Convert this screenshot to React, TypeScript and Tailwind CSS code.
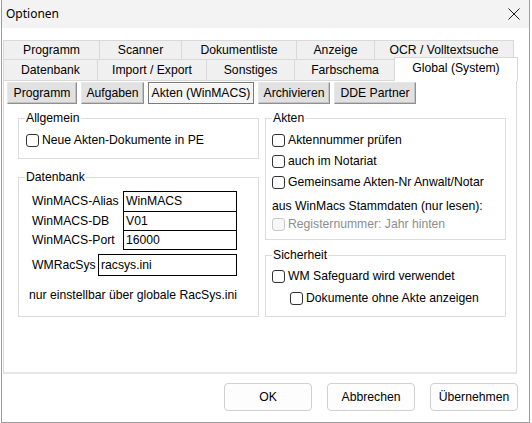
import type { ReactNode } from 'react';

const topTabs = [
  { label: 'Programm', w: 'w-[96px]' },
  { label: 'Scanner', w: 'w-[82px]' },
  { label: 'Dokumentliste', w: 'w-[115px]' },
  { label: 'Anzeige', w: 'w-[78px]' },
  { label: 'OCR / Volltextsuche', w: 'w-[140px] border-r' },
];

const bottomTabs = [
  { label: 'Datenbank', w: 'w-[94px]' },
  { label: 'Import / Export', w: 'w-[109px]' },
  { label: 'Sonstiges', w: 'w-[88px]' },
  { label: 'Farbschema', w: 'w-[101px]' },
];

const subTabs = [
  { label: 'Programm', w: 'w-[70px]' },
  { label: 'Aufgaben', w: 'w-[63px]' },
  { label: 'Akten (WinMACS)', w: 'w-[106px]', active: true },
  { label: 'Archivieren', w: 'w-[72px]' },
  { label: 'DDE Partner', w: 'w-[82px]' },
];

function Checkbox({ label, disabled = false, className = '' }: { label: string; disabled?: boolean; className?: string }) {
  return (
    <label className={`flex items-center h-[15px] leading-[15px] ${className}`}>
      <span
        className={`shrink-0 w-[13px] h-[13px] rounded-[3px] border ${
          disabled ? 'border-[#c9c9c9] bg-[#f7f7f7]' : 'border-[#333333] bg-white'
        }`}
      />
      <span className={`ml-[3px] ${disabled ? 'text-[#8d8d8d]' : 'text-black'}`}>{label}</span>
    </label>
  );
}

function GroupBox({ title, className, children }: { title: string; className: string; children: ReactNode }) {
  return (
    <div className={`border border-[#dcdcdc] flex flex-col ${className}`}>
      <div className="-mt-[8px] ml-[6px] px-[1px] bg-white w-fit h-[15px] leading-[15px]">{title}</div>
      {children}
    </div>
  );
}

function Field({ value, className }: { value: string; className: string }) {
  return (
    <div className={`border border-black bg-white pl-[2px] flex items-center leading-[15px] ${className}`}>
      {value}
    </div>
  );
}

export default function App() {
  return (
    <div className="w-[532px] h-[423px] bg-white font-['Liberation_Sans',Arial,sans-serif] text-[12.2px] text-black whitespace-nowrap">
      <div className="ml-px w-[529px] h-[423px] border-x border-b border-[#9c9c9c] flex flex-col">
        {/* title bar */}
        <div className="h-[28px] bg-[#f3f3f3] flex items-center justify-between pl-[4px] pr-[8px] shrink-0">
          <span className="font-['Segoe_UI','Noto_Sans',sans-serif] text-[12px] text-black">Optionen</span>
          <svg width="12" height="12" viewBox="0 0 12 12" className="mr-[1px]">
            <path d="M0.5 0.5 L11.5 11.5 M11.5 0.5 L0.5 11.5" stroke="#1a1a1a" strokeWidth="1" fill="none" />
          </svg>
        </div>

        {/* tab rows */}
        <div className="mt-[12px] ml-px flex flex-col">
          <div className="flex h-[19px]">
            {topTabs.map((t) => (
              <div
                key={t.label}
                className={`${t.w} h-[19px] border-t border-l border-[#d9d9d9] bg-[#f0f0f0] flex items-center justify-center leading-[15px]`}
              >
                {t.label}
              </div>
            ))}
          </div>
          <div className="flex h-[21px] items-end">
            {bottomTabs.map((t) => (
              <div
                key={t.label}
                className={`${t.w} h-[21px] border-t border-l border-[#d9d9d9] bg-[#f0f0f0] flex items-center justify-center leading-[15px]`}
              >
                {t.label}
              </div>
            ))}
            <div className="relative z-10 -ml-px -mb-px w-[124px] h-[24px] border-t border-x border-[#d9d9d9] bg-white flex items-start justify-center pt-[3px] leading-[15px]">
              Global (System)
            </div>
          </div>
        </div>

        {/* panel */}
        <div className="ml-px w-[514px] h-[294px] border border-[#d9d9d9] border-b-[2px] border-b-[#e6e6e6] bg-white flex flex-col">
          <div className="mt-px pl-[3px] flex gap-[4px]">
            {subTabs.map((t) =>
              t.active ? (
                <div
                  key={t.label}
                  className={`${t.w} h-[22px] border border-[#7a7a7a] bg-[#f4f4f4] shadow-[inset_1px_1px_0_#ffffff] flex items-center justify-center leading-[15px]`}
                >
                  {t.label}
                </div>
              ) : (
                <div
                  key={t.label}
                  className={`${t.w} h-[22px] border border-t-[#e8e8e8] border-l-[#e8e8e8] border-r-[#8f8f8f] border-b-[#8f8f8f] bg-[#e1e1e1] shadow-[inset_-1px_-1px_0_#c4c4c4] flex items-center justify-center leading-[15px]`}
                >
                  {t.label}
                </div>
              )
            )}
          </div>

          <div className="mt-[14px] pl-[14px] flex gap-[6px]">
            {/* left column */}
            <div className="w-[241px] flex flex-col">
              <GroupBox title="Allgemein" className="h-[41px]">
                <Checkbox label="Neue Akten-Dokumente in PE" className="mt-[7px] ml-[7px]" />
              </GroupBox>

              <GroupBox title="Datenbank" className="mt-[18px] h-[140px]">
                <div className="mt-[6px] flex flex-col">
                  <div className="flex items-center">
                    <span className="ml-[13px] w-[91px]">WinMACS-Alias</span>
                    <Field value="WinMACS" className="w-[114px] h-[21px]" />
                  </div>
                  <div className="flex items-center -mt-px">
                    <span className="ml-[13px] w-[91px]">WinMACS-DB</span>
                    <Field value="V01" className="w-[114px] h-[20px]" />
                  </div>
                  <div className="flex items-center -mt-px">
                    <span className="ml-[13px] w-[91px]">WinMACS-Port</span>
                    <Field value="16000" className="w-[114px] h-[20px]" />
                  </div>
                  <div className="flex items-center mt-[4px]">
                    <span className="ml-[13px] w-[66px]">WMRacSys</span>
                    <Field value="racsys.ini" className="w-[139px] h-[22px]" />
                  </div>
                  <div className="mt-[12px] ml-[10px] leading-[15px]">nur einstellbar über globale RacSys.ini</div>
                </div>
              </GroupBox>
            </div>

            {/* right column */}
            <div className="w-[241px] flex flex-col">
              <GroupBox title="Akten" className="h-[122px]">
                <div className="ml-[6px] flex flex-col">
                  <Checkbox label="Aktennummer prüfen" className="mt-[7px]" />
                  <Checkbox label="auch im Notariat" className="mt-[6px]" />
                  <Checkbox label="Gemeinsame Akten-Nr Anwalt/Notar" className="mt-[6px]" />
                  <div className="mt-[9px] leading-[15px]">aus WinMacs Stammdaten (nur lesen):</div>
                  <Checkbox label="Registernummer: Jahr hinten" disabled className="mt-[3px]" />
                </div>
              </GroupBox>

              <GroupBox title="Sicherheit" className="mt-[15px] h-[62px]">
                <div className="ml-[6px] flex flex-col">
                  <Checkbox label="WM Safeguard wird verwendet" className="mt-[6px]" />
                  <Checkbox label="Dokumente ohne Akte anzeigen" className="mt-[7px] ml-[18px]" />
                </div>
              </GroupBox>
            </div>
          </div>
        </div>

        {/* dialog buttons */}
        <div className="mt-[9px] pr-[11px] flex justify-end gap-[15px]">
          {['OK', 'Abbrechen', 'Übernehmen'].map((b) => (
            <button
              key={b}
              className="w-[88px] h-[28px] rounded-[4px] border border-[#d0d0d0] bg-[#fdfdfd] flex items-center justify-center leading-[15px] text-black"
            >
              {b}
            </button>
          ))}
        </div>
      </div>
    </div>
  );
}
